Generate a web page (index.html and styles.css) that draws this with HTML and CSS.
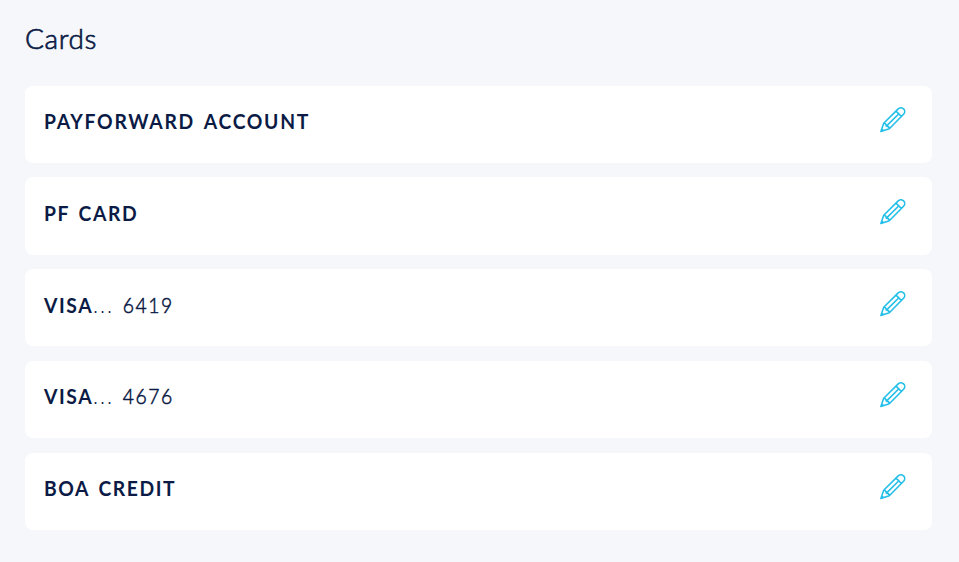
FILE: index.html
```html
<!DOCTYPE html>
<html lang="en">
<head>
<meta charset="utf-8">
<title>Cards</title>
<link rel="stylesheet" href="styles.css">
</head>
<body>
<svg width="0" height="0" class="defs"><symbol id="pencil" viewBox="0 0 26 26"><path d="M.9 24.5 3.7 16.2 18.2 1.9a3.7 3.7 0 0 1 5.4 5.4L9.3 21.8ZM3.7 16.2c1.9 0 2.6.7 2.7 2.9 2.1.1 2.9.8 2.9 2.7M6.4 19.1 18.9 6.7M16 4.1l5.4 5.4M1.8 22l1.8 1.7"/></symbol></svg>
<main>
<h1>Cards</h1>
<ul class="cards">
<li class="card"><span class="name payforward"><b>PAYFORWARD ACCOUNT</b></span><svg class="edit"><use href="#pencil"/></svg></li>
<li class="card"><span class="name"><b>PF CARD</b></span><svg class="edit"><use href="#pencil"/></svg></li>
<li class="card"><span class="name"><b>VISA</b><span class="dots">...</span><span class="digits">6419</span></span><svg class="edit"><use href="#pencil"/></svg></li>
<li class="card"><span class="name"><b>VISA</b><span class="dots">...</span><span class="digits">4676</span></span><svg class="edit"><use href="#pencil"/></svg></li>
<li class="card"><span class="name"><b>BOA CREDIT</b></span><svg class="edit"><use href="#pencil"/></svg></li>
</ul>
</main>
</body>
</html>
```
FILE: styles.css
```css
* { box-sizing: border-box; }
body { margin: 0; min-height: 562px; background: #f5f7fb; color: #0b1b45; font-family: Lato, "Liberation Sans", sans-serif; }
.defs { display: block; }
main { padding: 20px 27px 0 25px; }
h1 { margin: 0 0 29.8px; font-size: 28px; line-height: 36px; font-weight: 300; letter-spacing: .6px; -webkit-text-stroke: .7px; }
.cards { margin: 0; padding: 0; list-style: none; display: flex; flex-direction: column; gap: 14.6px; }
.card { height: 77.1px; padding: 19.5px 26.5px 0 18.6px; background: #fff; border-radius: 8px; display: flex; justify-content: space-between; align-items: flex-start; }
.name { font-size: 21px; line-height: 31px; letter-spacing: 1.7px; word-spacing: 3px; white-space: nowrap; font-weight: 300; transform: scaleX(.92); transform-origin: left; }
.name b { font-weight: 700; }
.payforward { letter-spacing: 1.85px; word-spacing: 3.3px; }
.dots { letter-spacing: 2.8px; margin-right: 9px; }
.digits { letter-spacing: 1.7px; -webkit-text-stroke: .55px; }
.edit { width: 26px; height: 26px; margin-top: 1.9px; fill: none; stroke: #23bfe8; stroke-width: 1.6; stroke-linejoin: round; stroke-linecap: round; }
```
